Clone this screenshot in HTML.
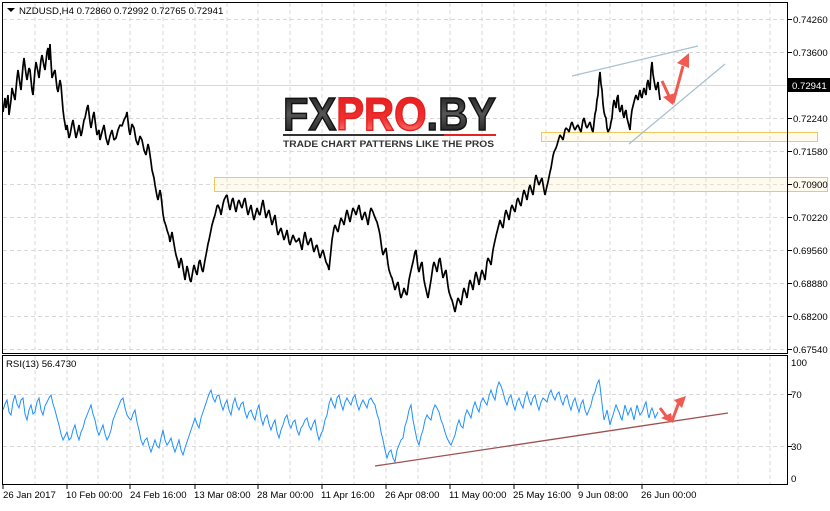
<!DOCTYPE html>
<html><head><meta charset="utf-8"><style>
body{margin:0;background:#fff;width:830px;height:506px;overflow:hidden;font-family:"Liberation Sans",sans-serif;}
svg text{font-family:"Liberation Sans",sans-serif;font-size:10px;fill:#000}
svg text.ax{font-size:9.6px}
</style></head><body>
<svg width="830" height="506" viewBox="0 0 830 506" xmlns="http://www.w3.org/2000/svg">
<defs>
<linearGradient id="gk" x1="0" y1="0" x2="0" y2="1"><stop offset="0" stop-color="#111"/><stop offset="0.5" stop-color="#555"/><stop offset="1" stop-color="#111"/></linearGradient>
<linearGradient id="gr" x1="0" y1="0" x2="0" y2="1"><stop offset="0" stop-color="#e01818"/><stop offset="0.6" stop-color="#f03030"/><stop offset="1" stop-color="#f8a0a0"/></linearGradient>
</defs>
<g stroke="#d8d8d8" stroke-dasharray="4,3" stroke-width="1">
<path d="M35 3V353M67 3V353M98 3V353M130 3V353M163 3V353M195 3V353M227 3V353M258 3V353M290 3V353M322 3V353M354 3V353M386 3V353M418 3V353M450 3V353M482 3V353M514 3V353M546 3V353M578 3V353M610 3V353M642 3V353M674 3V353M706 3V353M738 3V353M770 3V353"/>
<path d="M35 356V484M67 356V484M98 356V484M130 356V484M163 356V484M195 356V484M227 356V484M258 356V484M290 356V484M322 356V484M354 356V484M386 356V484M418 356V484M450 356V484M482 356V484M514 356V484M546 356V484M578 356V484M610 356V484M642 356V484M674 356V484M706 356V484M738 356V484M770 356V484"/>
<path d="M3 19.5H787M3 52.5H787M3 118.5H787M3 151.5H787M3 184.5H787M3 217.5H787M3 250.5H787M3 283.5H787M3 316.5H787M3 349.5H787"/>
<path d="M3 394.5H787M3 446.5H787"/>
</g>
<path d="M3 85.5H787" stroke="#d8d8d8"/>
<!-- logo -->
<text x="283" y="130" textLength="213" lengthAdjust="spacingAndGlyphs" style="font-family:'Liberation Sans',sans-serif;font-weight:900;font-size:46px;fill:url(#gk);stroke:#111;stroke-width:1.5">FX<tspan style="fill:url(#gr);stroke:#e52222">PRO</tspan>.BY</text>
<rect x="283" y="134" width="213" height="2" fill="#333"/>
<rect x="444" y="134" width="52" height="2" fill="#e52222"/>
<text x="283" y="147" textLength="211" lengthAdjust="spacingAndGlyphs" style="font-family:'Liberation Sans',sans-serif;font-weight:bold;font-size:9.5px;fill:#333">TRADE CHART PATTERNS LIKE THE PROS</text>
<!-- zones -->
<rect x="541.5" y="132.5" width="276" height="9" fill="rgba(255,240,200,0.3)" stroke="#f0c860"/>
<rect x="214.5" y="177.5" width="613" height="14" fill="rgba(255,240,200,0.3)" stroke="#f0c860"/>
<!-- price -->
<polyline fill="none" stroke="#000" stroke-width="1.7" stroke-linejoin="bevel" points="3,112 5,98 6,108 8,95 9,115 11,100 12,88 14,96 15,100 17,78 18,70 20,84 21,90 23,66 24,58 26,74 27,80 29,68 30,70 32,90 33,95 35,70 36,62 38,72 39,78 41,60 42,55 44,66 45,70 47,52 48,48 49,60 50,44 51,62 52,78 54,72 55,70 57,88 58,92 60,80 61,85 63,110 64,118 66,130 67,125 69,138 70,135 72,124 73,120 75,132 76,138 78,130 79,125 81,136 82,132 84,120 85,118 87,108 88,105 90,122 91,128 93,116 94,112 96,128 97,135 99,130 100,140 102,132 104,125 106,138 108,145 110,136 112,130 114,140 116,138 118,130 120,125 122,126 124,120 126,116 127,112 129,130 130,135 132,124 134,128 136,140 138,145 140,136 142,140 144,150 146,155 148,144 149,148 151,162 152,170 154,178 155,185 157,196 158,200 160,190 161,195 163,214 164,220 166,226 167,230 169,236 170,242 172,232 173,238 175,250 176,255 178,262 179,268 181,258 182,262 184,274 185,280 187,266 188,270 190,280 191,282 193,270 194,265 196,272 197,275 199,262 200,260 202,270 203,272 205,260 206,255 208,244 209,240 211,230 212,225 214,218 215,215 217,206 218,205 220,210 221,215 223,204 224,200 226,196 227,195 229,206 230,210 232,200 233,198 235,208 236,212 238,202 239,200 241,206 242,208 244,200 245,198 247,210 248,215 250,208 251,205 253,216 254,220 256,212 257,208 259,214 260,215 262,204 263,200 265,212 266,218 268,212 269,210 271,220 272,225 274,218 275,215 277,230 278,235 280,230 281,228 283,236 284,240 286,234 287,230 289,242 290,245 292,238 293,235 295,240 296,242 298,240 299,238 301,246 302,250 304,236 305,232 307,242 308,245 310,240 311,238 313,248 314,252 316,246 317,245 319,254 320,258 322,252 323,250 325,258 326,262 328,266 329,270 331,250 332,240 334,228 335,225 337,230 338,232 340,222 341,218 343,222 344,225 346,214 347,210 349,218 350,222 352,212 353,208 355,212 356,215 358,208 359,205 361,216 362,220 364,214 365,212 367,220 368,225 370,212 371,208 373,212 374,215 376,220 377,222 379,230 380,235 382,250 383,255 385,250 386,248 388,264 389,270 391,276 392,278 394,286 395,290 397,284 398,282 400,294 401,298 403,292 404,288 406,294 407,295 409,280 410,275 412,266 413,262 415,252 416,250 418,268 419,272 421,264 422,262 424,280 425,285 427,294 428,298 430,286 431,280 433,266 434,262 436,268 437,272 439,260 440,258 442,272 443,278 445,272 446,270 448,286 449,292 451,298 452,300 454,308 455,312 457,302 458,298 460,302 461,305 463,292 464,288 466,294 467,298 469,284 470,280 472,286 473,290 475,276 476,272 478,280 479,285 481,274 482,270 484,276 485,280 487,262 488,258 490,262 491,265 493,250 494,245 496,236 497,232 499,224 500,220 502,226 503,228 505,214 506,210 508,216 509,220 511,208 512,205 514,210 515,212 517,200 518,198 520,204 521,206 523,194 524,190 526,196 527,200 529,188 530,185 532,192 533,195 535,180 536,175 538,182 539,185 541,180 542,178 544,190 545,195 547,186 548,182 550,172 551,168 553,156 554,152 556,148 557,145 559,138 560,135 562,138 563,140 565,130 566,128 568,130 569,132 571,124 572,122 574,128 575,130 577,126 578,125 580,130 581,132 583,120 584,118 586,126 587,128 589,124 590,122 592,130 593,132 595,114 596,110 597,100 598,95 599,80 600,72 601,84 602,90 603,104 604,112 605,116 606,118 607,128 608,132 609,130 610,128 611,122 612,118 613,106 614,100 615,104 616,108 617,98 618,95 619,108 620,112 621,108 622,105 623,114 624,118 625,112 626,110 627,118 628,122 629,126 630,130 631,118 632,110 633,106 634,102 635,98 636,95 637,98 638,100 639,94 640,90 641,96 642,98 643,92 644,88 645,92 646,95 647,84 648,80 649,86 650,90 651,70 652,62 653,74 654,80 655,86 656,90 657,86 658,82 659,92 660,100"/>
<!-- trend lines -->
<line x1="572" y1="76" x2="698" y2="46" stroke="#a8c0d0" stroke-width="1.3"/>
<line x1="629" y1="144" x2="725" y2="64" stroke="#a8c0d0" stroke-width="1.3"/>
<!-- arrows -->
<g stroke="#f05a50" stroke-width="3" fill="#f05a50">
<line x1="662" y1="81" x2="669" y2="96"/>
<line x1="673" y1="103" x2="683" y2="66"/>
</g>
<polygon points="663,97 675,93 673,105" fill="#f05a50"/>
<polygon points="677,63 689,53 689,68" fill="#f05a50"/>
<!-- frames -->
<rect x="2.5" y="2.5" width="785" height="351" fill="none" stroke="#000"/>
<rect x="2.5" y="355.5" width="785" height="129" fill="none" stroke="#000"/>
<!-- RSI -->
<polyline fill="none" stroke="#1e90ff" stroke-width="1" points="3,410 5,404 7,400 9,412 11,415 13,402 15,395 17,404 19,408 21,400 23,398 25,414 27,420 29,410 31,405 33,414 35,412 37,402 39,398 41,410 43,415 45,406 47,402 49,398 51,395 53,404 55,410 57,418 59,425 61,434 63,440 65,436 67,432 69,440 71,438 73,430 75,425 77,434 79,440 81,432 83,428 85,420 87,415 89,410 91,405 93,414 95,420 97,430 99,435 101,430 103,425 105,434 107,440 109,436 111,430 113,420 115,415 117,410 119,405 121,400 123,398 125,408 127,415 129,418 131,420 133,414 135,410 137,422 139,430 141,440 143,445 145,440 147,438 149,446 151,452 153,446 155,440 157,446 159,448 161,438 163,430 165,440 167,445 169,442 171,438 173,446 175,452 177,446 179,440 181,450 183,455 185,448 187,442 189,436 191,430 193,424 195,418 197,424 199,428 201,418 203,412 205,406 207,400 209,394 211,390 213,398 215,402 217,396 219,395 221,404 223,410 225,404 227,400 229,410 231,415 233,404 235,398 237,406 239,410 241,404 243,402 245,412 247,418 249,412 251,410 253,416 255,420 257,410 259,405 261,418 263,425 265,418 267,415 269,424 271,430 273,424 275,420 277,432 279,438 281,430 283,425 285,418 287,415 289,424 291,428 293,422 295,420 297,430 299,435 301,428 303,425 305,420 307,418 309,426 311,430 313,424 315,420 317,432 319,440 321,434 323,430 325,420 327,415 329,404 331,398 333,404 335,408 337,398 339,395 341,404 343,410 345,402 347,398 349,402 351,405 353,398 355,395 357,404 359,410 361,404 363,400 365,404 367,408 369,400 371,398 373,402 375,405 377,414 379,420 381,432 383,440 385,450 387,458 389,452 391,450 393,458 395,462 397,450 399,445 401,440 403,438 405,426 407,420 409,410 411,405 413,420 415,430 417,440 419,445 421,436 423,430 425,420 427,415 429,418 431,420 433,410 435,405 437,408 439,412 441,420 443,425 445,432 447,438 449,442 451,445 453,440 455,435 457,426 459,420 461,426 463,428 465,416 467,410 469,414 471,418 473,408 475,402 477,408 479,412 481,402 483,398 485,402 487,405 489,396 491,390 493,396 495,400 497,388 499,382 501,386 503,392 505,400 507,405 509,398 511,395 513,404 515,410 517,402 519,398 521,404 523,408 525,398 527,392 529,400 531,405 533,398 535,395 537,404 539,410 541,402 543,398 545,400 547,402 549,394 551,390 553,396 555,400 557,394 559,392 561,400 563,405 565,398 567,395 569,404 571,410 573,402 575,398 577,406 579,412 581,404 583,400 585,410 587,415 589,410 591,405 593,396 595,392 597,384 599,380 600,386 601,395 603,412 604,420 606,414 607,410 609,420 610,425 612,418 613,415 615,408 616,405 618,410 619,412 621,418 622,420 624,410 625,405 627,412 628,415 630,410 631,408 633,416 634,420 636,410 637,405 639,412 640,415 642,412 643,410 645,404 646,402 648,414 649,418 651,410 652,408 654,414 655,418 657,414 658,412"/>
<line x1="375" y1="466" x2="728" y2="413" stroke="#a05050" stroke-width="1.3"/>
<g stroke="#f05a50" stroke-width="3" fill="#f05a50">
<line x1="660" y1="408" x2="666" y2="416"/>
<line x1="672" y1="421" x2="679" y2="402"/>
</g>
<polygon points="661,418 671,413 673,423" fill="#f05a50"/>
<polygon points="674,400 686,396 682,408" fill="#f05a50"/>
<!-- header texts -->
<polygon points="7,8 15,8 11,12" fill="#000"/>
<text x="19" y="14" class="ax">NZDUSD,H4  0.72860 0.72992 0.72765 0.72941</text>
<text x="6" y="367" class="ax">RSI(13) 56.4730</text>
<!-- price axis -->
<g stroke="#000"><path d="M788 19.5h4M788 52.5h4M788 118.5h4M788 151.5h4M788 184.5h4M788 217.5h4M788 250.5h4M788 283.5h4M788 316.5h4M788 349.5h4M788 394.5h4M788 446.5h4"/></g>
<g class="ax">
<text class="ax" x="793" y="23">0.74260</text>
<text class="ax" x="793" y="56">0.73600</text>
<rect x="788" y="78" width="42" height="14" fill="#000"/>
<text class="ax" x="792" y="89" style="fill:#fff">0.72941</text>
<text class="ax" x="793" y="122">0.72240</text>
<text class="ax" x="793" y="155">0.71580</text>
<text class="ax" x="793" y="188">0.70900</text>
<text class="ax" x="793" y="221">0.70220</text>
<text class="ax" x="793" y="254">0.69560</text>
<text class="ax" x="793" y="287">0.68880</text>
<text class="ax" x="793" y="320">0.68200</text>
<text class="ax" x="793" y="353">0.67540</text>
<text class="ax" x="791" y="366">100</text>
<text class="ax" x="791" y="398">70</text>
<text class="ax" x="791" y="450">30</text>
<text class="ax" x="791" y="482">0</text>
</g>
<!-- time axis -->
<g stroke="#000"><path d="M3 485v4M67 485v4M130 485v4M195 485v4M258 485v4M322 485v4M386 485v4M450 485v4M514 485v4M578 485v4M642 485v4"/></g>
<text class="ax" x="3" y="498">26 Jan 2017</text>
<text class="ax" x="66" y="498">10 Feb 00:00</text>
<text class="ax" x="130" y="498">24 Feb 16:00</text>
<text class="ax" x="194" y="498">13 Mar 08:00</text>
<text class="ax" x="257" y="498">28 Mar 00:00</text>
<text class="ax" x="321" y="498">11 Apr 16:00</text>
<text class="ax" x="385" y="498">26 Apr 08:00</text>
<text class="ax" x="449" y="498">11 May 00:00</text>
<text class="ax" x="513" y="498">25 May 16:00</text>
<text class="ax" x="578" y="498">9 Jun 08:00</text>
<text class="ax" x="641" y="498">26 Jun 00:00</text>
</svg>
</body></html>
